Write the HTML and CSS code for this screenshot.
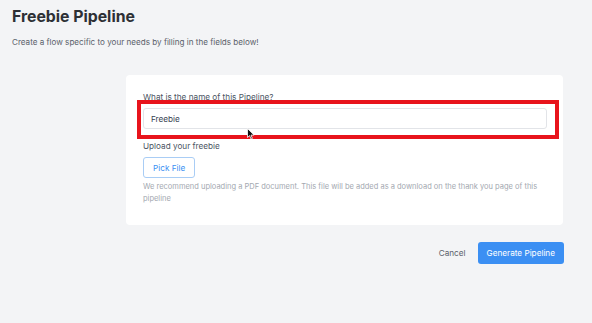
FILE: index.html
```html
<!DOCTYPE html>
<html lang="en">
<head>
  <meta charset="UTF-8" />
  <meta name="viewport" content="width=device-width, initial-scale=1.0"/>
  <title>Freebie Pipeline</title>
  <link rel="stylesheet" href="styles.css">
</head>
<body>

  <div class="page">
    <h1 class="title">Freebie Pipeline</h1>
    <p class="subtitle">Create a flow specific to your needs by filling in the fields below!</p>

    <div class="card">
      <div class="form-group name-group">
        <label for="pipelineName">What is the name of this Pipeline?</label>
        <input type="text" id="pipelineName" value="Freebie" />
        <div class="highlight"></div>
        <svg class="cursor" width="8" height="12" viewBox="0 0 8 12">
          <path d="M0.5 0.5 L0.5 9.5 L2.6 7.6 L4 11 L5.4 10.4 L4 7.1 L7 7.1 Z" fill="#111" stroke="#fff" stroke-width="0.8"/>
        </svg>
      </div>

      <div class="form-group">
        <label>Upload your freebie</label>
        <button type="button" class="pick-btn">Pick File</button>
        <p class="help">We recommend uploading a PDF document. This file will be added as a download on the thank you page of this pipeline</p>
      </div>
    </div>

    <div class="actions">
      <button type="button" class="cancel-btn">Cancel</button>
      <button type="button" class="primary-btn">Generate Pipeline</button>
    </div>
  </div>

</body>
</html>
```

FILE: styles.css
```css
body {
  margin: 0;
  font-family: Inter, "Noto Sans", sans-serif;
  background: #f3f4f6;
  color: #374151;
}

.page {
  padding: 8px 0 0 12px;
}

.title {
  margin: 0;
  font-size: 15.8px;
  font-weight: 700;
  color: #2d3035;
  line-height: 18px;
}

.subtitle {
  margin: 10px 0 0;
  font-size: 8.1px;
  color: #5b616b;
  line-height: 12px;
}

.card {
  margin: 27px 0 0 114px;
  width: 437px;
  height: 150px;
  box-sizing: border-box;
  background: #fff;
  border-radius: 4px;
  padding: 16px 16px 0 17px;
}

.form-group {
  position: relative;
}

label {
  display: block;
  font-size: 8.2px;
  line-height: 12px;
  color: #4b5563;
  margin-bottom: 5px;
}

.name-group input {
  display: block;
  width: 100%;
  box-sizing: border-box;
  height: 21px;
  padding: 0 7px;
  border: 1px solid #e2e4e8;
  border-radius: 3px;
  font-family: inherit;
  font-size: 8.2px;
  color: #374151;
  background: #fff;
}

.highlight {
  position: absolute;
  left: -6px;
  top: 9px;
  width: 414px;
  height: 31px;
  border: 4px solid #e8141c;
}

.cursor {
  position: absolute;
  left: 104px;
  top: 37px;
}

.form-group + .form-group {
  margin-top: 11px;
}

.pick-btn {
  display: block;
  height: 21px;
  padding: 0 9px;
  border: 1px solid #a9cdf5;
  border-radius: 3px;
  background: #fff;
  color: #3b8ff3;
  font-family: inherit;
  font-size: 8.2px;
  margin-top: 4px;
}

.help {
  margin: 3px 0 0;
  font-size: 7.5px;
  line-height: 12px;
  color: #a3a8b0;
  padding-right: 8px;
}

.actions {
  width: 552px;
  display: flex;
  justify-content: flex-end;
  align-items: center;
  gap: 12px;
  margin-top: 17px;
}

.cancel-btn {
  border: none;
  background: none;
  font-family: inherit;
  font-size: 8.2px;
  color: #5b616b;
  padding: 0;
}

.primary-btn {
  height: 22px;
  padding: 0 9px;
  border: none;
  border-radius: 3px;
  background: #3b8ff3;
  color: #fff;
  font-family: inherit;
  font-size: 8.2px;
}
```
